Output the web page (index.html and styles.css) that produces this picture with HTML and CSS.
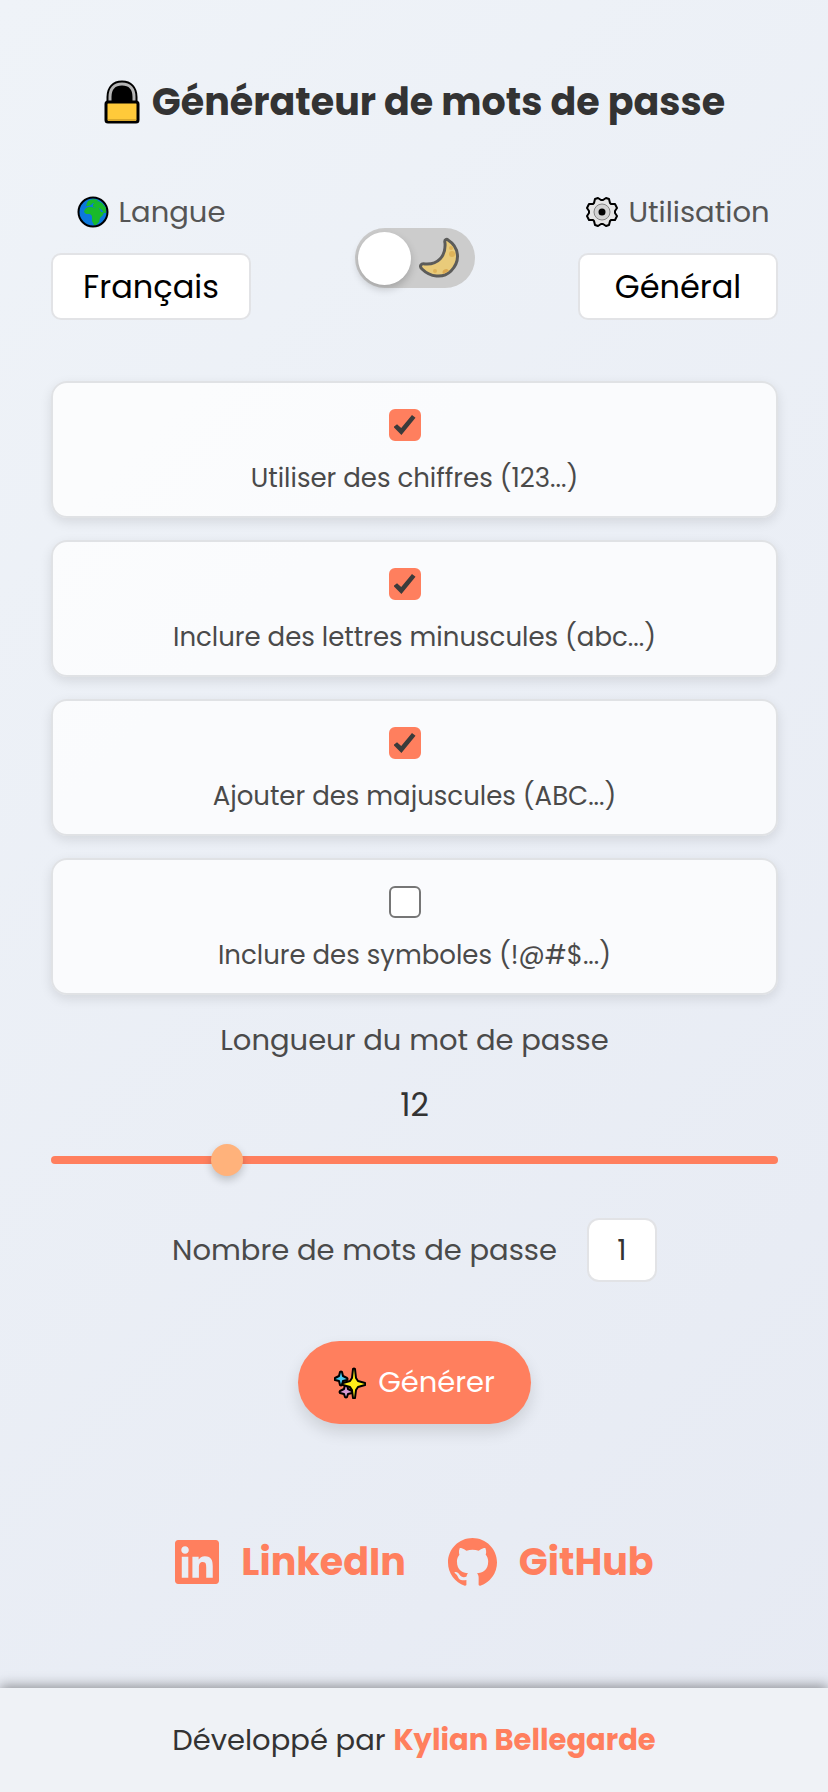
FILE: index.html
```
<!DOCTYPE html>
<html lang="fr">
<head>
    <meta charset="UTF-8">
    <meta name="viewport" content="width=device-width, initial-scale=1.0">
    <title>Générateur de mots de passe</title>
    <link rel="stylesheet" href="styles.css">
</head>
<body>
    <main class="container">
        <h1>
            <svg class="lock-icon" viewBox="0 0 36 44" aria-hidden="true">
                <path d="M5 24V17C5 8 10 3 18 3s13 5 13 14v7" fill="#000" stroke="#000" stroke-width="5"/>
                <path d="M6 24V17C6 9 10 4 18 4s12 5 12 13v7" fill="none" stroke="#b5b5b5" stroke-width="3"/>
                <rect x="2" y="22" width="32" height="20" rx="2" fill="#ffca3a" stroke="#000" stroke-width="3"/>
                <path d="M4 40h28" stroke="#d9a82c" stroke-width="2"/>
            </svg>
            Générateur de mots de passe
        </h1>

        <section class="settings">
            <div class="setting">
                <label for="language">
                    <svg class="label-icon" viewBox="0 0 32 32" aria-hidden="true">
                        <circle cx="16" cy="16" r="14.5" fill="#0b78dc" stroke="#000" stroke-width="2"/>
                        <path d="M11 5l5-2 5 1-2 3-3 0-2 2-3 1-2 0 1-3z" fill="#19b92b"/>
                        <path d="M8 13l3-2 4 0 3 1 4 0 2 4 3 0-1 3-3 3-1 4-3 3h-2l-2-4 0-5-2-2-4 0-2-2z" fill="#19b92b"/>
                        <path d="M16 8l5-3 4 2 4 5 0 5-2 0-2-3-3-2-3 0-3-1z" fill="#19b92b"/>
                    </svg>
                    Langue
                </label>
                <select id="language">
                    <option>Français</option>
                    <option>English</option>
                </select>
            </div>

            <label class="switch">
                <input type="checkbox" id="theme" aria-label="Mode sombre">
                <span class="knob"></span>
                <svg class="moon-icon" viewBox="0 0 42 42" aria-hidden="true">
                    <path d="M29 3C28 2 25 2 26 6C27 19 19 28 6 27C2 26 0 29 3 32C11 40 24 42 32 34C42 24 40 10 29 3Z" fill="#e9cb7a" stroke="#5c5c5a" stroke-width="3" stroke-linejoin="round"/>
                    <circle cx="33" cy="17" r="3" fill="#dfb45a"/>
                    <circle cx="32" cy="11" r="2" fill="#dfb45a"/>
                    <circle cx="16" cy="34" r="2" fill="#dfb45a"/>
                    <path d="M24 37a3 3 0 0 1 6-3z" fill="#dba850"/>
                </svg>
            </label>

            <div class="setting">
                <label for="usage">
                    <svg class="label-icon" viewBox="0 0 32 32" aria-hidden="true">
                        <path d="M12 2l3 2h2l3-2 3 1 1 4 1 1 4 0 2 4-2 3v2l2 3-2 4-4 0-1 1-1 4-3 1-3-2h-2l-3 2-3-1-1-4-1-1-4 0-2-4 2-3v-2l-2-3 2-4 4 0 1-1 1-4z" fill="#e6e6e6" stroke="#000" stroke-width="2" stroke-linejoin="round"/>
                        <circle cx="16" cy="16" r="8" fill="#d3d3d3" stroke="#858585"/>
                        <circle cx="16" cy="16" r="3.5"/>
                    </svg>
                    Utilisation
                </label>
                <select id="usage">
                    <option>Général</option>
                    <option>Wi-Fi</option>
                </select>
            </div>
        </section>

        <section class="options">
            <label class="option">
                <input type="checkbox" checked>
                <span>Utiliser des chiffres (123...)</span>
            </label>
            <label class="option">
                <input type="checkbox" checked>
                <span>Inclure des lettres minuscules (abc...)</span>
            </label>
            <label class="option">
                <input type="checkbox" checked>
                <span>Ajouter des majuscules (ABC...)</span>
            </label>
            <label class="option">
                <input type="checkbox">
                <span>Inclure des symboles (!@#$...)</span>
            </label>
        </section>

        <section class="length">
            <label for="length">Longueur du mot de passe</label>
            <output id="length-value" for="length">12</output>
            <input type="range" id="length" min="6" max="32" value="12">
        </section>

        <section class="count">
            <label for="count">Nombre de mots de passe</label>
            <input type="number" id="count" min="1" max="9" value="1">
        </section>

        <button type="button" class="generate">
            <svg class="label-icon" viewBox="0 0 32 32" aria-hidden="true">
                <g stroke="#000" stroke-width="2" stroke-linejoin="round">
                    <path d="M6 5q1-1 2 0l1 4 4 2q1 1 0 2l-4 1-1 4q-1 1-2 0l-1-4-4-1q-1-1 0-2l4-2z" fill="#48c8ee"/>
                    <path d="M11 18q1-1 2 0l1 4 4 2q1 1 0 2l-4 1-1 3q-1 1-2 0l-1-3-4-1q-1-1 0-2l4-2z" fill="#d79bd3"/>
                    <path d="M19 2q1-1 2 0l1 9 2 3 7 2q1 1 0 2l-7 2-2 3-1 8q-1 1-2 0l-1-8-2-3-7-2q-1-1 0-2l7-2 2-3z" fill="#ffed19"/>
                </g>
            </svg>
            Générer
        </button>

        <nav class="social">
            <a href="#linkedin">
                <svg class="linkedin-icon" viewBox="0 0 448 448" aria-hidden="true">
                    <path fill="currentColor" d="M416 0H31.900C14.300 0 0 14.500 0 32.300v383.400C0 433.500 14.300 448 31.900 448H416c17.600 0 32-14.500 32-32.300V32.300C448 14.500 433.600 0 416 0zM135.400 384H69V170.200h66.500V384zM102.200 141c-21.300 0-38.500-17.300-38.500-38.500S80.900 64 102.200 64c21.200 0 38.500 17.300 38.500 38.500 0 21.300-17.200 38.500-38.500 38.500zM384.300 384h-66.400V280c0-24.800-.5-56.700-34.500-56.700-34.600 0-39.900 27-39.900 54.900V384h-66.400V170.200h63.700v29.200h.9c8.900-16.800 30.600-34.500 62.900-34.500 67.200 0 79.700 44.300 79.700 101.900z"/>
                </svg>
                LinkedIn
            </a>
            <a href="#github">
                <svg class="github-icon" viewBox="0 0 16 16" aria-hidden="true">
                    <path fill="currentColor" d="M8 0C3.580 0 0 3.580 0 8c0 3.540 2.290 6.530 5.470 7.590.4.070.55-.17.55-.38 0-.19-.01-.82-.01-1.490-2.010.37-2.530-.49-2.690-.94-.09-.23-.48-.94-.82-1.130-.28-.15-.68-.52-.01-.53.63-.01 1.080.58 1.230.82.72 1.210 1.870.87 2.330.66.07-.52.28-.87.51-1.070-1.780-.2-3.640-.89-3.640-3.950 0-.87.31-1.590.82-2.150-.08-.2-.36-1.020.08-2.120 0 0 .67-.21 2.200.82.64-.18 1.320-.27 2-.27s1.360.09 2 .27c1.530-1.040 2.200-.82 2.200-.82.44 1.100.16 1.920.08 2.120.51.56.82 1.270.82 2.150 0 3.070-1.870 3.750-3.650 3.950.29.25.54.73.54 1.480 0 1.070-.01 1.930-.01 2.200 0 .21.15.46.55.38A8.010 8.010 0 0 0 16 8c0-4.420-3.580-8-8-8z"/>
                </svg>
                GitHub
            </a>
        </nav>
    </main>

    <footer>
        <p>Développé par <a href="#author">Kylian Bellegarde</a></p>
    </footer>

    <script src="script.js"></script>
</body>
</html>
```
FILE: styles.css
```
* {
    box-sizing: border-box;
}

body {
    font-family: Poppins, Inter, sans-serif;
    margin: 0;
    min-height: 100vh;
    display: flex;
    flex-direction: column;
    color: #333;
    background: linear-gradient(135deg, #eff3f8, #e6eaf3);
}

.container {
    flex: 1;
    display: flex;
    flex-direction: column;
    align-items: center;
    padding: 72px 50px 32px 51px;
}

h1 {
    display: flex;
    align-items: center;
    gap: 12px;
    margin: 0 0 60px;
    font-size: 38px;
    line-height: 60px;
    white-space: nowrap;
}

svg {
    flex: none;
}

.lock-icon {
    width: 36px;
    height: 44px;
}

.label-icon {
    width: 32px;
    height: 32px;
}

/* Language, theme and usage */
.settings {
    width: 100%;
    display: flex;
    justify-content: space-between;
    align-items: center;
    margin-bottom: 61px;
}

.setting {
    width: 200px;
    display: flex;
    flex-direction: column;
    align-items: center;
    gap: 21px;
}

.setting label {
    display: flex;
    align-items: center;
    gap: 10px;
    font-size: 29px;
    line-height: 40px;
    color: #555;
    white-space: nowrap;
}

select {
    appearance: none;
    width: 100%;
    height: 67px;
    padding: 0 16px;
    border: 2px solid #e2e3e6;
    border-radius: 10px;
    background: #fff;
    color: #000;
    font-family: inherit;
    font-size: 32px;
    text-align: center;
    text-align-last: center;
}

.switch {
    width: 120px;
    height: 60px;
    margin-top: 4px;
    padding: 3px;
    display: flex;
    align-items: center;
    gap: 8px;
    border-radius: 30px;
    background: #ccc;
    cursor: pointer;
}

.switch input {
    position: absolute;
    opacity: 0;
}

.knob {
    width: 53px;
    height: 53px;
    border-radius: 50%;
    background: #fff;
    box-shadow: 0 4px 8px rgba(0, 0, 0, 0.2);
}

.moon-icon {
    width: 42px;
    height: 42px;
}

/* Options */
.options {
    width: 100%;
    display: flex;
    flex-direction: column;
    gap: 22px;
    margin-bottom: 24px;
}

.option {
    display: flex;
    flex-direction: column;
    align-items: center;
    gap: 19px;
    padding: 26px 20px 19px;
    border: 2px solid #e0e2e5;
    border-radius: 16px;
    background: rgba(255, 255, 255, 0.75);
    box-shadow: 0 4px 12px rgba(0, 0, 0, 0.1);
    color: #4a4a4a;
    font-size: 26px;
    line-height: 37px;
    cursor: pointer;
}

.option input {
    appearance: none;
    width: 32px;
    height: 32px;
    margin: 0 20px 0 0;
    display: grid;
    place-items: center;
    border: 2px solid #767676;
    border-radius: 6px;
    background: #fff;
}

.option input:checked {
    border-color: #ff7f5e;
    background: #ff7f5e;
}

.option input:checked::before {
    content: "";
    width: 22px;
    height: 20px;
    background: #3b3b3b;
    clip-path: polygon(0 60%, 16% 46%, 35% 65%, 84% 0, 100% 14%, 36% 100%);
}

/* Length */
.length {
    width: 100%;
    display: flex;
    flex-direction: column;
    align-items: center;
    margin-bottom: 38px;
}

.length label,
.count label {
    color: #4a4a4a;
    font-size: 29px;
    line-height: 42px;
}

.length output {
    margin: 20px 0;
    font-size: 32px;
    line-height: 48px;
}

.length input {
    appearance: none;
    width: 100%;
    height: 8px;
    margin: 7px 0 16px;
    border-radius: 4px;
    background: #ff7f5e;
}

.length input::-webkit-slider-thumb {
    appearance: none;
    width: 32px;
    height: 32px;
    border-radius: 50%;
    background: #ffb27b;
    box-shadow: 0 4px 8px rgba(0, 0, 0, 0.2);
}

/* Number of passwords */
.count {
    display: flex;
    align-items: center;
    gap: 30px;
    margin-bottom: 59px;
}

.count input {
    appearance: textfield;
    width: 70px;
    height: 64px;
    padding: 0;
    border: 2px solid #e2e3e6;
    border-radius: 12px;
    background: #fff;
    color: #333;
    font-family: inherit;
    font-size: 29px;
    text-align: center;
}

.count input::-webkit-inner-spin-button {
    appearance: none;
    margin: 0;
}

.generate {
    display: flex;
    align-items: center;
    gap: 12px;
    height: 83px;
    padding: 0 36px;
    margin-bottom: 108px;
    border: none;
    border-radius: 42px;
    background: #ff7f5e;
    box-shadow: 0 8px 16px rgba(0, 0, 0, 0.12);
    color: #fff;
    font-family: inherit;
    font-size: 29px;
    cursor: pointer;
}

/* Links */
.social {
    display: flex;
    gap: 42px;
}

.social a {
    display: flex;
    align-items: center;
    gap: 22px;
    color: #ff7f5e;
    font-size: 38px;
    font-weight: 700;
    line-height: 60px;
    text-decoration: none;
}

.linkedin-icon {
    width: 44px;
    height: 44px;
}

.github-icon {
    width: 49px;
    height: 49px;
}

footer {
    padding: 31px 20px;
    background: #eff2f6;
    box-shadow: 0 -2px 12px rgba(0, 0, 0, 0.4);
    text-align: center;
    font-size: 29px;
    line-height: 42px;
}

footer p {
    margin: 0;
}

footer a {
    color: #ff7f5e;
    font-weight: 700;
    text-decoration: none;
}
```
FILE: script.js
```
const lengthInput = document.getElementById('length');
const lengthValue = document.getElementById('length-value');

// Show the chosen length above the slider
lengthInput.addEventListener('input', () => {
    lengthValue.textContent = lengthInput.value;
});
```
